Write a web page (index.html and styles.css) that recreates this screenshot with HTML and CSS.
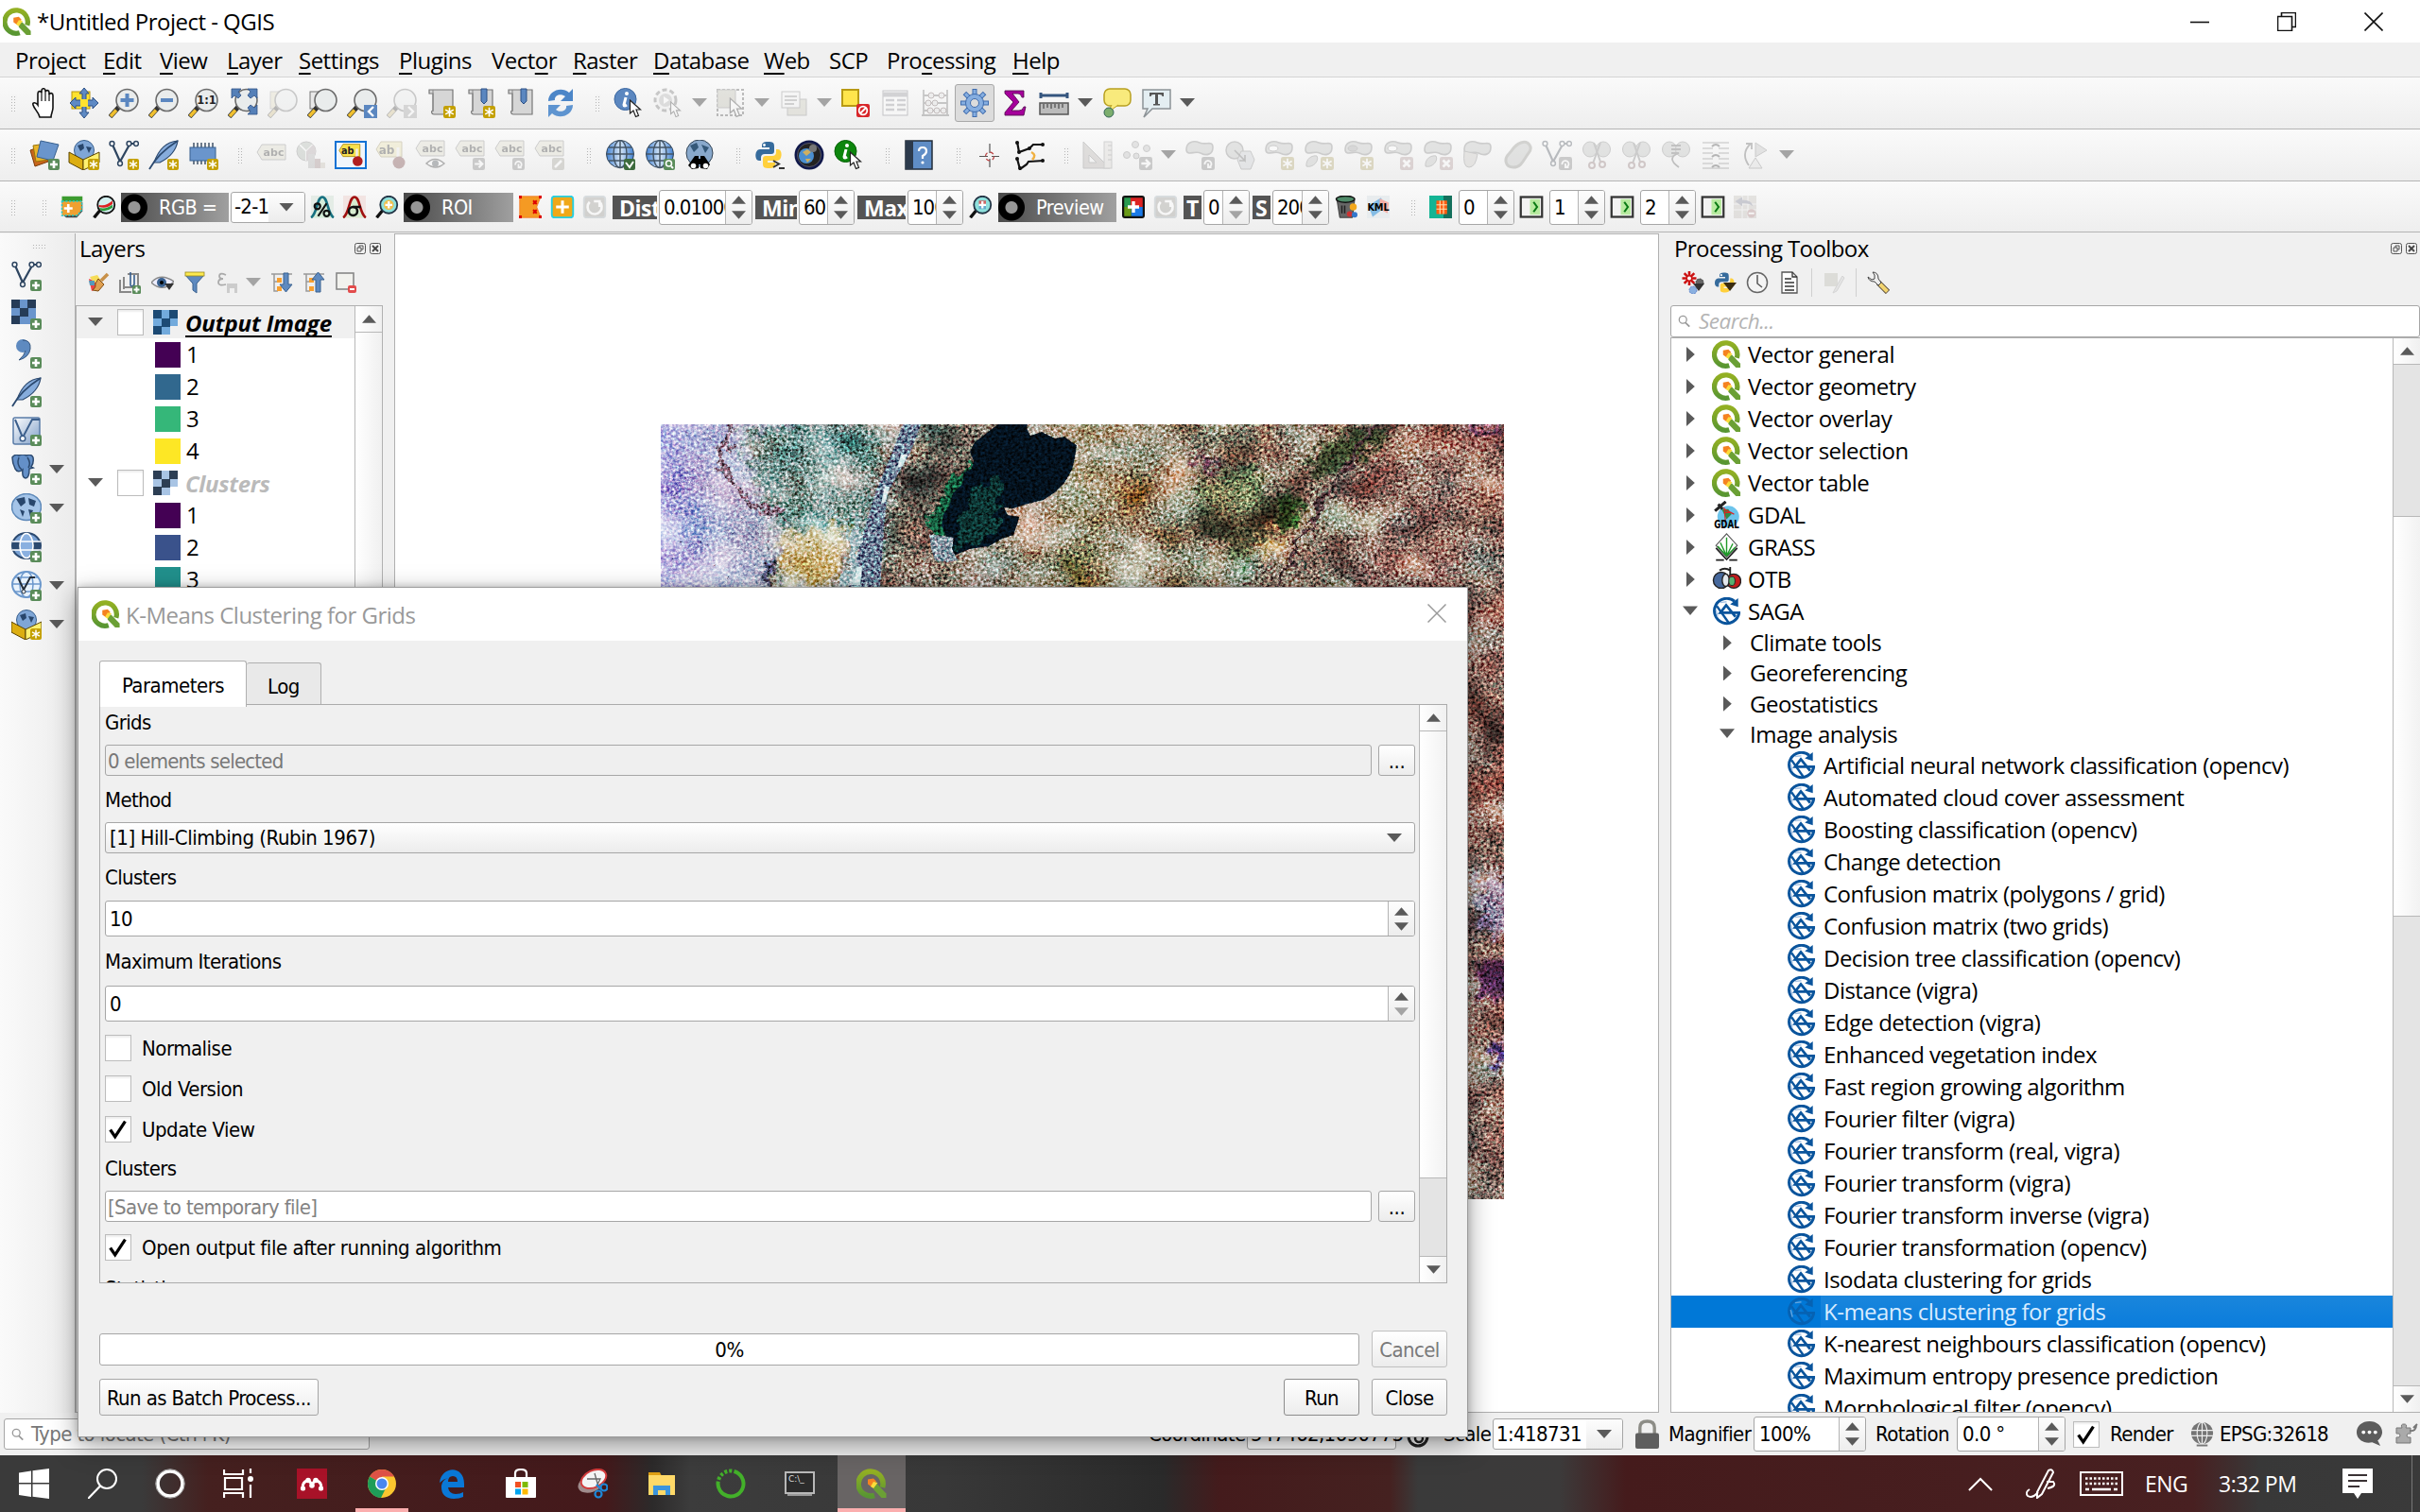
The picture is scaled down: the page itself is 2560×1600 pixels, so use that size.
FILE: index.html
```html
<!DOCTYPE html>
<html lang="en">
<head>
<meta charset="utf-8">
<title>*Untitled Project - QGIS</title>
<link rel="stylesheet" href="styles.css">
</head>
<body>
<svg class="defs" aria-hidden="true">
  <defs>
    <linearGradient id="gq" x1="0" y1="0" x2="0" y2="1"><stop offset="0" stop-color="#93b023"/><stop offset="1" stop-color="#589632"/></linearGradient>
    <linearGradient id="gg" x1="0" y1="0" x2="1" y2="0"><stop offset="0" stop-color="#3f7fd0"/><stop offset=".5" stop-color="#d8e8f8"/><stop offset="1" stop-color="#3f7fd0"/></linearGradient>
    <linearGradient id="gl" x1="0" y1="0" x2="1" y2="1"><stop offset="0" stop-color="#fff"/><stop offset="1" stop-color="#7f9fc8"/></linearGradient>
  </defs>
  <symbol id="bp" viewBox="0 0 12 12"><rect width="12" height="12" rx="2" fill="#5a8c5a"/><path d="M6 2v8M2 6h8" stroke="#fff" stroke-width="2.6"/></symbol>
  <symbol id="bs" viewBox="0 0 12 12"><rect width="12" height="12" rx="2" fill="#c4a000"/><path d="M6 1.500v9M2 3.800l8 4.400M10 3.800L2 8.200" stroke="#fff" stroke-width="1.500"/></symbol>
  <symbol id="bx" viewBox="0 0 12 12"><rect width="12" height="12" rx="2" fill="#c88"/><path d="M3 3l6 6M9 3L3 9" stroke="#fff" stroke-width="2.4"/></symbol>
  <symbol id="br" viewBox="0 0 12 12"><rect width="12" height="12" rx="2" fill="#777"/><path d="M3 7a3 3 0 1 1 3 2.500M6 6v3.500H9" stroke="#fff" stroke-width="1.6" fill="none"/></symbol>
  <symbol id="ba" viewBox="0 0 12 12"><rect width="12" height="12" rx="2" fill="#777"/><path d="M2 6h7M6 2.500L9.500 6 6 9.500" stroke="#fff" stroke-width="2" fill="none"/></symbol>
  <symbol id="cur" viewBox="0 0 14 20"><path d="M1 1v14l3.500-3 2.500 6.500 3-1.200L7.500 11H12z" fill="#fff" stroke="#222" stroke-width="1.200"/></symbol>
  <symbol id="q" viewBox="0 0 32 32"><path d="M27.500 20A13 13 0 1 0 19 28.500" fill="none" stroke="url(#gq)" stroke-width="5.600"/><path d="M18 17l4-.5 9.500 10V31h-5L18 22z" fill="#6ba035"/><path d="M12 11.500l6-1 3 3-5 6-4-3z" fill="#f58220"/><path d="M18 14l4.500 1-4.500 6-3-2z" fill="#fbdc3a"/></symbol>
  <symbol id="mg" viewBox="0 0 32 32"><path d="M1.500 30.500L11 20" stroke="#333" stroke-width="5"/><path d="M2 30l6-6.500" stroke="#f0c030" stroke-width="3.600"/><circle cx="19.500" cy="13" r="11.500" fill="#e9ecec" stroke="#6c6c6c" stroke-width="1.600"/></symbol>
  <symbol id="hand" viewBox="0 0 32 32"><path d="M11 31c-1-5-6-9-7-13-1-3 3-3 5 0V6c0-3 3-3 4-1V3c0-3 4-3 4 0v1c1-2 4-2 4 1v2c1-2 4-2 4 1v13c0 4-2 6-2 10z" fill="#fff" stroke="#111" stroke-width="1.600"/><path d="M13 5v9M17 4v10M21 6v8" stroke="#111" stroke-width="1.200"/></symbol>
  <symbol id="pan" viewBox="0 0 32 32"><rect x="3" y="4" width="19" height="18" fill="#ffe22e" stroke="#b8960c"/><path d="M16 0l5 6h-3v7h7v-3l6 6-6 6v-3h-7v7h3l-5 6-5-6h3v-7H7v3l-6-6 6-6v3h7V6h-3z" fill="#5e8ac4" stroke="#2d5086"/><rect x="12" y="12" width="8" height="8" fill="#ffe22e"/></symbol>
  <symbol id="zin" viewBox="0 0 32 32"><use href="#mg"/><path d="M19.500 6v14M12.500 13h14" stroke="#5b87c0" stroke-width="4"/></symbol>
  <symbol id="zout" viewBox="0 0 32 32"><use href="#mg"/><path d="M13 13h13" stroke="#5b87c0" stroke-width="4"/></symbol>
  <symbol id="z11" viewBox="0 0 32 32"><use href="#mg"/><text x="19.500" y="17" font-size="11.500" font-weight="700" text-anchor="middle" fill="#222">1:1</text></symbol>
  <symbol id="zfull" viewBox="0 0 32 32"><use href="#mg"/><g fill="#5580b8" stroke="#2d5086" stroke-width=".8"><path d="M4 1h10l-3 3 3 4-3 3-4-3-3 3z"/><path d="M31 1H21l3 3-3 4 3 3 4-3 3 3z"/><path d="M31 28H21l3-3-3-4 3-3 4 3 3-3z"/></g></symbol>
  <symbol id="zsel" viewBox="0 0 32 32"><rect x="3" y="4" width="16" height="18" fill="#e8dc90" stroke="#999"/><use href="#mg"/></symbol>
  <symbol id="zlay" viewBox="0 0 32 32"><rect x="3" y="4" width="16" height="18" fill="#e8e8e8" stroke="#777"/><use href="#mg"/></symbol>
  <symbol id="zlast" viewBox="0 0 32 32"><use href="#mg"/><rect x="18" y="18" width="14" height="14" fill="#5b87c0"/><path d="M28 20l-5 5 5 5" stroke="#fff" stroke-width="2.400" fill="none"/></symbol>
  <symbol id="znext" viewBox="0 0 32 32"><use href="#mg"/><rect x="18" y="18" width="14" height="14" fill="#999"/><path d="M23 20l5 5-5 5" stroke="#fff" stroke-width="2.400" fill="none"/></symbol>
  <symbol id="map" viewBox="0 0 32 32"><path d="M3 2h25v26H8c-3 0-3-4-1-4V6H3z" fill="#d6d6d6" stroke="#777" stroke-width="1.200"/><path d="M7 2v23" stroke="#888"/></symbol>
  <symbol id="map1" viewBox="0 0 32 32"><use href="#map"/><use href="#bs" x="18" y="19" width="13" height="13"/></symbol>
  <symbol id="map2" viewBox="0 0 32 32"><use href="#map"/><path d="M16 1h6v13l-3 3-3-3z" fill="#5b87c0" stroke="#2d5086"/><use href="#bs" x="18" y="19" width="13" height="13"/></symbol>
  <symbol id="map3" viewBox="0 0 32 32"><use href="#map"/><path d="M16 1h6v13l-3 3-3-3z" fill="#5b87c0" stroke="#2d5086"/></symbol>
  <symbol id="refr" viewBox="0 0 32 32"><path d="M3 14C3 3 17-2 25 5l4-4v13H16l5-5C16 5 9 8 10 13z" fill="#4c86c8"/><path d="M29 18c0 11-14 16-22 9l-4 4V18h13l-5 5c5 4 12 1 11-4z" fill="#5e94d0"/></symbol>
  <symbol id="iden" viewBox="0 0 32 32"><circle cx="12.500" cy="12" r="11.500" fill="#5b87c0" stroke="#3b67a0"/><path d="M13 10l-2 8q0 2 3 0" stroke="#fff" stroke-width="3" fill="none"/><circle cx="14" cy="6" r="2" fill="#fff"/><use href="#cur" x="16" y="12" width="15" height="20"/></symbol>
  <symbol id="idg" viewBox="0 0 32 32"><circle cx="12.500" cy="12" r="11.500" fill="#0d860d" stroke="#076007"/><path d="M13 10l-2 8q0 2 3 0" stroke="#fff" stroke-width="3" fill="none"/><circle cx="14" cy="6" r="2" fill="#fff"/><use href="#cur" x="16" y="12" width="15" height="20"/></symbol>
  <symbol id="act" viewBox="0 0 32 32"><circle cx="13" cy="13" r="11" fill="#eee" stroke="#666" stroke-width="3" stroke-dasharray="5 3"/><circle cx="13" cy="13" r="7" fill="#aaa"/><path d="M11 9l6 4-6 4z" fill="#fff"/><use href="#cur" x="17" y="14" width="14" height="18"/></symbol>
  <symbol id="selr" viewBox="0 0 32 32"><rect x="2" y="2" width="27" height="27" fill="none" stroke="#444" stroke-width="2" stroke-dasharray="3 2"/><rect x="2" y="2" width="19" height="19" fill="#bcb890" stroke="#777"/><use href="#cur" x="14" y="10" width="16" height="22"/></symbol>
  <symbol id="form" viewBox="0 0 32 32"><rect x="10" y="12" width="20" height="17" fill="#c8c49a" stroke="#777"/><rect x="4" y="4" width="19" height="17" fill="#f4f4f4" stroke="#777"/><path d="M7 9h13M7 13h13M7 17h10" stroke="#888" stroke-width="2"/></symbol>
  <symbol id="dsel" viewBox="0 0 32 32"><rect x="2" y="2" width="17" height="17" fill="#ffe54c" stroke="#b89a14" stroke-width="2"/><rect x="17" y="17" width="14" height="14" rx="2" fill="#d8262a"/><circle cx="24" cy="24" r="4.300" fill="none" stroke="#fff" stroke-width="1.800"/><path d="M21 27l6-6" stroke="#fff" stroke-width="1.800"/></symbol>
  <symbol id="tab" viewBox="0 0 32 32"><rect x="3" y="3" width="26" height="26" fill="#fff" stroke="#667"/><path d="M3 7h26" stroke="#889" stroke-width="5"/><path d="M6 13h9M18 13h9M6 18h9M18 18h9M6 23h9M18 23h9" stroke="#889" stroke-width="2.400"/></symbol>
  <symbol id="abac" viewBox="0 0 32 32"><path d="M4 2v28M29 2v28M2 29h29M4 8h25M4 16h25M4 24h25" stroke="#666" stroke-width="1.800"/><g fill="#ddd" stroke="#744"><circle cx="12" cy="8" r="3"/><circle cx="23" cy="8" r="3"/><circle cx="9" cy="16" r="3"/><circle cx="16" cy="16" r="3"/><circle cx="11" cy="24" r="3"/><circle cx="18" cy="24" r="3"/><circle cx="25" cy="24" r="3"/></g></symbol>
  <symbol id="gear" viewBox="0 0 32 32"><g stroke="#3f6cae" stroke-width="5"><path d="M16 1v30M1 16h30M5.400 5.400l21.200 21.200M26.600 5.400L5.400 26.600"/></g><g stroke="#86aee0" stroke-width="3"><path d="M16 2v28M2 16h28M6.100 6.100l19.800 19.800M25.900 6.100L6.100 25.900"/></g><circle cx="16" cy="16" r="9.500" fill="#86aee0" stroke="#3f6cae"/><circle cx="16" cy="16" r="4.500" fill="#dcdcdc" stroke="#3f6cae"/></symbol>
  <symbol id="sum" viewBox="0 0 32 32"><path d="M6 3h20v7h-2q-1-4-4-4h-6l7 9-8 9h8q4 0 5-4h2l-2 9H6v-3l9-11L6 6z" fill="#a5009b" stroke="#4c0048" stroke-width=".8"/></symbol>
  <symbol id="meas" viewBox="0 0 32 32"><path d="M2 8h28M2 5v6M30 5v6" stroke="#34557e" stroke-width="3"/><rect x="1" y="16" width="30" height="12" fill="#bbb" stroke="#555" stroke-width="1.500"/><path d="M5 17v5M9 17v4M13 17v5M17 17v4M21 17v5M25 17v4" stroke="#333"/></symbol>
  <symbol id="tip" viewBox="0 0 32 32"><rect x="3" y="1" width="28" height="18" rx="6" fill="#f8ea7c" stroke="#b8a020" stroke-width="1.500"/><path d="M11 18l-4 8 11-8" fill="#f8ea7c" stroke="#b8a020"/><circle cx="8" cy="26" r="5" fill="#7cae6e" stroke="#365"/></symbol>
  <symbol id="ann" viewBox="0 0 32 32"><path d="M2 2h29v20H12l-9 9 4-9H2z" fill="#e4eef2" stroke="#8c9296" stroke-width="1.500"/><path d="M9 5h15v4h-1.500q0-2-3-2H18v10h2v1.500h-7V17h2V7h-1.500q-3 0-3 2H9z" fill="#555"/></symbol>

  <symbol id="dsm" viewBox="0 0 32 32"><path d="M1 11l14-5 5 17-14 5z" fill="#c8651c" stroke="#7c3c08"/><path d="M4 6l14-2 3 17-14 2z" fill="#e9b52a" stroke="#9a7408"/><path d="M12 1l19 4-6 17-17-4z" fill="#6a95cc" stroke="#38608f"/><use href="#bp" x="20" y="20" width="12" height="12"/></symbol>
  <symbol id="gpk" viewBox="0 0 32 32"><circle cx="16" cy="11" r="10.500" fill="#7fa6d6" stroke="#38608f"/><path d="M9 6l6-2 1 5-4 3zM18 7l6 1-3 6z" fill="#28466c"/><path d="M0 13l15 8v11L0 24z" fill="#dcae12" stroke="#5a4400"/><path d="M32 13l-17 8v11l17-8z" fill="#fff170" stroke="#5a4400"/><use href="#bs" x="20" y="20" width="12" height="12"/></symbol>
  <symbol id="vv" viewBox="0 0 32 32"><path d="M4 5l8 18L22 5M24 4h5" fill="none" stroke="#2e4560" stroke-width="2.200"/><g fill="#fff" stroke="#2e4560" stroke-width="1.500"><circle cx="3.500" cy="4" r="2.400"/><circle cx="12" cy="25" r="2.400"/><circle cx="21.500" cy="4" r="2.400"/><circle cx="29" cy="4" r="2.400"/></g></symbol>
  <symbol id="vs" viewBox="0 0 32 32"><use href="#vv"/><use href="#bs" x="20" y="20" width="12" height="12"/></symbol>
  <symbol id="vp" viewBox="0 0 32 32"><use href="#vv"/><use href="#bp" x="20" y="20" width="12" height="12"/></symbol>
  <symbol id="fth" viewBox="0 0 32 32"><path d="M31 1C20 2 11 9 6 24l6 0c8-4 17-10 19-23z" fill="#86acdc" stroke="#2c4a70" stroke-width="1.200"/><path d="M31 1C20 8 8 18 1 31" fill="none" stroke="#2c4a70" stroke-width="1.800"/></symbol>
  <symbol id="fs" viewBox="0 0 32 32"><use href="#fth"/><use href="#bs" x="20" y="20" width="12" height="12"/></symbol>
  <symbol id="fp" viewBox="0 0 32 32"><use href="#fth"/><use href="#bp" x="20" y="20" width="12" height="12"/></symbol>
  <symbol id="chip" viewBox="0 0 32 32"><path d="M6 3v23M10 3v23M14 3v23M18 3v23M22 3v23M26 3v23" stroke="#4c5c70" stroke-width="1.600"/><rect x="2" y="8" width="27" height="14" fill="#6a95cc" stroke="#38608f"/><use href="#bs" x="20" y="20" width="12" height="12"/></symbol>
  <symbol id="abc" viewBox="0 0 32 32"><path d="M1 13l5-8h25v16H6z" fill="#ddd8a8" stroke="#777"/><text x="18.500" y="17" font-size="11" font-weight="700" text-anchor="middle" fill="#222">abc</text></symbol>
  <symbol id="dia" viewBox="0 0 32 32"><circle cx="11" cy="12" r="10" fill="#9cb49c" stroke="#777"/><path d="M11 12L4 5M11 12l7-7M11 12v10" stroke="#fff" stroke-width="1.500"/><path d="M11 12l7-7a10 10 0 0 1-7 17z" fill="#b898a0"/><rect x="13" y="15" width="7" height="15" fill="#aaa"/><rect x="20" y="20" width="6" height="10" fill="#b77"/><rect x="26" y="24" width="5" height="6" fill="#cb9"/></symbol>
  <symbol id="abp" viewBox="0 0 32 32"><path d="M1 10l5-8h22v16H6z" fill="#f8e04c" stroke="#a8860a"/><text x="12" y="15" font-size="12" font-weight="700" text-anchor="middle" fill="#222">ab</text><path d="M24 8v16" stroke="#eee" stroke-width="3"/><circle cx="25" cy="24" r="6.500" fill="#b01f1f"/></symbol>
  <symbol id="abe" viewBox="0 0 32 32"><use href="#abc" y="-4"/><path d="M12 25q9-9 19 0-9 8-19 0z" fill="#fff" stroke="#222" stroke-width="1.500"/><circle cx="21.500" cy="25" r="3.500" fill="#345"/></symbol>
  <symbol id="abm" viewBox="0 0 32 32"><use href="#abc" y="-4"/><use href="#ba" x="19" y="19" width="13" height="13"/></symbol>
  <symbol id="abr" viewBox="0 0 32 32"><use href="#abc" y="-4"/><use href="#br" x="19" y="19" width="13" height="13"/></symbol>
  <symbol id="abed" viewBox="0 0 32 32"><use href="#abc" y="-4"/><rect x="19" y="19" width="13" height="13" rx="2" fill="#a09a80"/><path d="M22 29l7-7" stroke="#fff" stroke-width="2.500"/></symbol>
  <symbol id="glb" viewBox="0 0 32 32"><circle cx="16" cy="15" r="14.500" fill="url(#gg)" stroke="#345" stroke-width="1"/><ellipse cx="16" cy="15" rx="7" ry="14.500" fill="none" stroke="#456" stroke-width="1.500"/><path d="M1.500 15h29M4 8h24M4 22h24M16 1v28" stroke="#456" stroke-width="1.500"/></symbol>
  <symbol id="glc" viewBox="0 0 32 32"><use href="#glb"/><rect x="20" y="20" width="12" height="12" rx="2" fill="#3d6b3d"/><path d="M22 24l4 5 4-6" stroke="#fff" stroke-width="2" fill="none"/></symbol>
  <symbol id="gls" viewBox="0 0 32 32"><use href="#glb"/><rect x="20" y="20" width="12" height="12" rx="2" fill="#5a8c5a"/><circle cx="25.500" cy="25" r="3" stroke="#fff" stroke-width="1.600" fill="none"/><path d="M28 28l2 2" stroke="#fff" stroke-width="2"/></symbol>
  <symbol id="glbn" viewBox="0 0 32 32"><circle cx="16" cy="14" r="14" fill="#89a9cc" stroke="#345"/><path d="M6 6l7-3 2 5-5 5zM18 5l8 3-4 6z" fill="#345878"/><path d="M11 17h4v3h2v-3h4l6 9-3 5-7-1v-4h-2v4l-7 1-4-4z" fill="#000"/><circle cx="9.500" cy="27.500" r="2.800" fill="#fff"/><circle cx="22.500" cy="27.500" r="2.800" fill="#fff"/></symbol>
  <symbol id="py" viewBox="0 0 32 32"><path d="M14 2c6 0 7 1 7 5v5q0 3-3 3h-7q-4 0-4 4v3H5c-5 0-5-12 1-12h10V8H8V6c0-3 2-4 6-4z" fill="#366b9c"/><path d="M16 30c-6 0-7-1-7-5v-5q0-3 3-3h7q4 0 4-4v-3h2c5 0 5 12-1 12H14v2h8v2c0 3-2 4-6 4z" fill="#ffd03c"/><circle cx="10.500" cy="5.500" r="1.400" fill="#fff"/></symbol>
  <symbol id="pyc" viewBox="0 0 32 32"><use href="#py"/><path d="M20 22l6 3.500-6 3.500M26 30h6" stroke="#333" stroke-width="2" fill="none"/></symbol>
  <symbol id="ea" viewBox="0 0 32 32"><circle cx="16" cy="16" r="15.500" fill="#10184a"/><circle cx="16" cy="16" r="12.500" fill="#222" stroke="#556" /><circle cx="13" cy="17" r="8" fill="#4b8fd0"/><path d="M9 13l5-3 4 3-5 4zM12 20l6 0-4 4z" fill="#d0b060"/><circle cx="20" cy="9" r="4" fill="#777"/></symbol>
  <symbol id="help" viewBox="0 0 32 32"><rect x="2" y="1" width="28" height="30" fill="#5f8dc6" stroke="#222c38" stroke-width="1.500"/><rect x="2" y="1" width="8" height="30" fill="#2c3a4c"/><path d="M16 12q0-4 4-4t4 4q0 3-4 5v3" stroke="#fff" stroke-width="2.200" fill="none"/><circle cx="20" cy="24" r="1.600" fill="#fff"/></symbol>
  <symbol id="crs" viewBox="0 0 32 32"><path d="M16 4v10M16 20v9M5 17.500h9M18 17.500h8" stroke="#555" stroke-width="1.200"/><circle cx="16" cy="17.500" r="4.500" fill="none" stroke="#b44" stroke-width="1.300" stroke-dasharray="4 3"/></symbol>
  <symbol id="snp" viewBox="0 0 32 32"><path d="M3 2l2 11 11-4 4-4h11M3 20l3 11 7-5 2-3 16-1" stroke="#111" stroke-width="2.200" fill="none"/><path d="M18 13q6 3 1 8" stroke="#f0b040" stroke-width="2.500" fill="none"/><g fill="#111"><circle cx="3" cy="3" r="2"/><circle cx="5" cy="13" r="2"/><circle cx="16" cy="9" r="2"/><circle cx="30" cy="5" r="2"/><circle cx="6" cy="30" r="2"/><circle cx="30" cy="22" r="2"/><circle cx="3" cy="20" r="2"/></g></symbol>
  <symbol id="tri" viewBox="0 0 32 32"><path d="M1 2l28 28H1zM7 16v8h8z" fill="#b8aaa0" stroke="#777" fill-rule="evenodd"/><rect x="23" y="2" width="8" height="28" fill="#ddd6cc" stroke="#888"/><path d="M27 6h4M27 11h4M27 16h4M27 21h4" stroke="#777"/></symbol>
  <symbol id="pts" viewBox="0 0 32 32"><g fill="#bbb" stroke="#777"><circle cx="14" cy="5" r="3.500"/><circle cx="5" cy="16" r="3.500"/><circle cx="26" cy="9" r="3.500"/><circle cx="15" cy="17" r="3"/></g><use href="#ba" x="18" y="18" width="14" height="14"/></symbol>
  <symbol id="blob" viewBox="0 0 32 32"><path d="M2 10C2 3 9 0 16 3s14-3 14 5-7 9-13 6-15 4-15-4z" fill="#b6bcb6" stroke="#777" stroke-width="1.600"/></symbol>
  <symbol id="d1" viewBox="0 0 32 32"><use href="#blob"/><use href="#br" x="18" y="18" width="14" height="14"/></symbol>
  <symbol id="d2" viewBox="0 0 32 32"><circle cx="11" cy="11" r="9" fill="#b6bcb6" stroke="#777" stroke-width="1.500"/><path d="M18 12h10l4 9-4 10H18l-4-10z" fill="#bfc8d4" stroke="#777"/><path d="M11 11l11 11v-6M22 22h-6" stroke="#555" stroke-width="1.600" fill="none"/></symbol>
  <symbol id="d3" viewBox="0 0 32 32"><use href="#blob"/><ellipse cx="10" cy="9" rx="5" ry="3" fill="#fff" stroke="#777"/><use href="#bs" x="18" y="18" width="14" height="14"/></symbol>
  <symbol id="d4" viewBox="0 0 32 32"><use href="#blob"/><path d="M3 28c-1-8 6-12 11-11 3 5-4 13-11 11z" fill="#b6bcb6" stroke="#777"/><use href="#bs" x="18" y="18" width="14" height="14"/></symbol>
  <symbol id="d5" viewBox="0 0 32 32"><use href="#blob"/><ellipse cx="10" cy="9" rx="5" ry="3" fill="#999" stroke="#777"/><use href="#bs" x="18" y="18" width="14" height="14"/></symbol>
  <symbol id="d6" viewBox="0 0 32 32"><use href="#blob"/><ellipse cx="10" cy="9" rx="5" ry="3" fill="#fff" stroke="#777"/><use href="#bx" x="18" y="18" width="14" height="14"/></symbol>
  <symbol id="d7" viewBox="0 0 32 32"><use href="#blob"/><path d="M3 28c-1-8 6-12 11-11 3 5-4 13-11 11z" fill="#b6bcb6" stroke="#777"/><use href="#bx" x="18" y="18" width="14" height="14"/></symbol>
  <symbol id="d8" viewBox="0 0 32 32"><use href="#blob"/><path d="M2 12l14 3q-2 14-9 14T2 12z" fill="#c8c0b4" stroke="#777"/></symbol>
  <symbol id="d9" viewBox="0 0 32 32"><path d="M20 3c8-3 13 5 8 11s-7 15-16 15S2 20 7 15 12 6 20 3z" fill="#b6bcb6" stroke="#887" stroke-width="3"/></symbol>
  <symbol id="d10" viewBox="0 0 32 32"><use href="#vv"/><use href="#br" x="18" y="18" width="14" height="14"/></symbol>
  <symbol id="d11" viewBox="0 0 32 32"><ellipse cx="9" cy="10" rx="7.500" ry="8" fill="#b6bcb6" stroke="#777"/><ellipse cx="23" cy="10" rx="7.500" ry="8" fill="#b6bcb6" stroke="#777"/><path d="M20 3l-8 22M13 3l7 20" stroke="#777" stroke-width="2"/><circle cx="11" cy="27" r="3" fill="none" stroke="#a66" stroke-width="2"/><circle cx="22" cy="26" r="3" fill="none" stroke="#a66" stroke-width="2"/></symbol>
  <symbol id="d12" viewBox="0 0 32 32"><ellipse cx="9" cy="10" rx="7.500" ry="8" fill="#b6bcb6" stroke="#777"/><ellipse cx="23" cy="10" rx="7.500" ry="8" fill="#b6bcb6" stroke="#777"/><path d="M11 6h10M11 10h10M11 14h8q-14 5 0 15" stroke="#555" stroke-width="1.800" fill="none"/></symbol>
  <symbol id="d13" viewBox="0 0 32 32"><path d="M2 3h28M2 9h11M19 9h11M2 14h11M19 14h11M2 20h11M19 20h11M2 25h11M19 25h11M2 30h28" stroke="#888" stroke-width="1.500"/><path d="M12 7q4-4 8 0M12 18q4-4 8 0M12 29q4-4 8 0" stroke="#333" stroke-width="2" fill="none"/></symbol>
  <symbol id="d14" viewBox="0 0 32 32"><path d="M16 3v15l12-7z" fill="#bbb" stroke="#777"/><path d="M16 19l7 11H9z" fill="#ddd" stroke="#777"/><path d="M9 27Q0 14 11 4M6 4h6v6" stroke="#555" stroke-width="1.800" fill="none"/></symbol>

  <symbol id="s1" viewBox="0 0 32 32"><rect x="2" y="1" width="29" height="7" fill="#3c9c30"/><path d="M2 9h29v13l-8 9H8l-5-4z" fill="#444"/><path d="M2 8h28v12l-6 8H2z" fill="#f0a030" stroke="#2cc" stroke-width="2" stroke-dasharray="3 2"/><path d="M11 12v12M5 18h12" stroke="#fff" stroke-width="3.500"/></symbol>
  <symbol id="s2" viewBox="0 0 32 32"><path d="M2 31l9-11" stroke="#111" stroke-width="4.500"/><circle cx="19" cy="13" r="12" fill="#d4f0f0" stroke="#111" stroke-width="2.400"/><path d="M9 13q9 3 19-6v5q-8 7-19 4z" fill="#d22"/><path d="M9 17q9 3 19-4v4q-8 6-16 4z" fill="#2a9a3a"/></symbol>
  <symbol id="s3" viewBox="0 0 32 32"><rect width="32" height="32" fill="#e4ece6"/><path d="M0 31C9 26 8 2 16 2s7 24 16 29" fill="#d4ecd8" stroke="#167080" stroke-width="3.500"/><circle cx="9" cy="15" r="4" stroke="#111" stroke-width="3" fill="none"/><circle cx="22" cy="25" r="4" stroke="#111" stroke-width="3" fill="none"/><path d="M22 11L10 29" stroke="#111" stroke-width="3"/></symbol>
  <symbol id="s4" viewBox="0 0 32 32"><rect width="32" height="32" fill="#f2e4e2"/><path d="M0 31C9 26 8 2 16 2s7 24 16 29" fill="#d8ecd0" stroke="#a01010" stroke-width="3.500"/><circle cx="14" cy="22" r="6" stroke="#111" stroke-width="3.400" fill="none"/><path d="M14 16h11" stroke="#111" stroke-width="3.400"/></symbol>
  <symbol id="s5" viewBox="0 0 32 32"><path d="M2 31l9-11" stroke="#111" stroke-width="4.500"/><circle cx="19" cy="13" r="12" fill="#8ee0dc" stroke="#234" stroke-width="2.400"/><circle cx="19" cy="13" r="7" fill="#f0c050"/><path d="M19 8v10M14 13h10" stroke="#fff" stroke-width="3"/></symbol>
  <symbol id="s5b" viewBox="0 0 32 32"><path d="M2 31l9-11" stroke="#111" stroke-width="4.500"/><circle cx="19" cy="13" r="12" fill="#8ee0dc" stroke="#234" stroke-width="2.400"/><rect x="14" y="7" width="10" height="6" fill="#c66"/><rect x="14" y="13" width="10" height="6" fill="#6ac"/><path d="M19 8v10M14 13h10" stroke="#fff" stroke-width="3"/></symbol>
  <symbol id="s6" viewBox="0 0 32 32"><path d="M1 1h30l-6 15 6 15H1z" fill="#f59a23" stroke="#f2701c"/><g fill="#d00"><path d="M0 0h4v4H0zM28 0h4v4h-4zM0 28h4v4H0zM28 28h4v4h-4z"/></g><path d="M20 7l5 5M25 7l-5 5M20 20l5 5M25 20l-5 5" stroke="#d00" stroke-width="2.500"/></symbol>
  <symbol id="s7" viewBox="0 0 32 32"><rect x="1" y="1" width="30" height="30" rx="4" fill="#f0a818" stroke="#24d0e4" stroke-width="2.500"/><path d="M16 7v18M7 16h18" stroke="#fff" stroke-width="4"/></symbol>
  <symbol id="s8" viewBox="0 0 32 32"><rect x="1" y="1" width="30" height="30" rx="4" fill="#908c78" stroke="#8ab" stroke-width="2.500"/><path d="M9 9a10 10 0 1 0 13-1h-6M15 8h8v8" stroke="#fff" stroke-width="3.500" fill="none"/></symbol>
  <symbol id="s9" viewBox="0 0 32 32"><rect width="32" height="32" rx="4" fill="#111"/><rect x="3" y="3" width="9" height="13" fill="#2a9a50"/><rect x="12" y="3" width="17" height="13" fill="#d22"/><rect x="3" y="16" width="10" height="13" fill="#6a9a18"/><rect x="13" y="16" width="16" height="13" fill="#1a7ae8"/><path d="M16 8v16M8 16h16" stroke="#fff" stroke-width="4.500"/></symbol>
  <symbol id="s10" viewBox="0 0 32 32"><path d="M3 6h25l-3 25H7z" fill="#666" stroke="#222"/><ellipse cx="15" cy="5" rx="13" ry="4.500" fill="#4e8a68" stroke="#111" stroke-width="2"/><path d="M10 14v11M14 14v11" stroke="#222" stroke-width="2"/><circle cx="26" cy="16" r="5" fill="#f4a81c"/><circle cx="21" cy="26" r="4" fill="#c33"/><circle cx="28" cy="27" r="4" fill="#37c"/></symbol>
  <symbol id="s11" viewBox="0 0 32 32"><rect width="32" height="32" fill="#e8ecee"/><path d="M2 14L20 3l5 14L8 30z" fill="#84bce4"/><path d="M18 4l13 6-2 15-11-6z" fill="#f4b0a8"/><text x="16" y="21" font-size="14" font-weight="700" text-anchor="middle" fill="#000" textLength="31" lengthAdjust="spacingAndGlyphs">KML</text></symbol>
  <symbol id="s12" viewBox="0 0 32 32"><rect width="32" height="32" fill="#14b494"/><rect x="20" width="12" height="32" fill="#14705c"/><rect x="10" y="7" width="15" height="19" fill="#ff5c10"/><path d="M15 7v19M20 7v19M10 13h15M10 19h15" stroke="#ffe0b0" stroke-width="1.500"/></symbol>
  <symbol id="s13" viewBox="0 0 32 32"><rect x="1" y="2" width="30" height="28" fill="#f2f2f2" stroke="#333" stroke-width="3"/><rect x="14" y="5" width="14" height="22" fill="#b8eaa0"/><path d="M19 9l5 7-5 7" stroke="#0a7a14" stroke-width="2.800" fill="none"/></symbol>
  <symbol id="s14" viewBox="0 0 32 32"><rect width="32" height="32" fill="#c4b8a8"/><path d="M0 12h32M0 20h32M12 0v32M20 0v32" stroke="#eee" stroke-width="1.500"/><path d="M2 8l10-6v4q14 0 15 9-5-5-15-4v4z" fill="#6a70a8"/><circle cx="25" cy="25" r="6" fill="#d66"/><path d="M21 25h8" stroke="#fff" stroke-width="2.500"/></symbol>

  <symbol id="ras" viewBox="0 0 26 26"><rect width="26" height="26" fill="var(--l)"/><path d="M0 0h9v9H0zM17 0h9v9h-9zM9 9h9v9H9zM0 17h9v9H0z" fill="var(--d)"/><path d="M18 17h8v9h-8z" fill="var(--e)"/></symbol>
  <symbol id="rp" viewBox="0 0 32 32"><g class="r0"><use href="#ras" width="26" height="26"/></g><use href="#bp" x="20" y="20" width="12" height="12"/></symbol>
  <symbol id="com" viewBox="0 0 32 32"><circle cx="12" cy="8" r="7" fill="#5e8ac0"/><path d="M12 2q9 0 8 9-1 9-12 12 6-5 7-10" fill="#5e8ac0" stroke="#34557e"/><use href="#bp" x="20" y="20" width="12" height="12"/></symbol>
  <symbol id="vl" viewBox="0 0 32 32"><rect x="2" y="2" width="28" height="28" rx="2" fill="url(#gl)" stroke="#5a7ca8" stroke-width="1.500"/><path d="M4 4l8 19L22 4h8" fill="none" stroke="#3c5f8c" stroke-width="2"/><circle cx="12" cy="24" r="2.800" fill="#fff" stroke="#3c5f8c" stroke-width="1.500"/><use href="#bp" x="20" y="20" width="12" height="12"/></symbol>
  <symbol id="pg" viewBox="0 0 32 32"><path d="M1 3q3-4 7-2 4-2 8 0 5-2 7 2 1 6-2 10l2 1-4 1q0 10-4 10-4-1-3-9-5 4-8-1-3-6-3-12z" fill="#6490c8" stroke="#2c4a70" stroke-width="1.500"/><path d="M8 3q-3 8 3 13M17 3q4 6 1 11" stroke="#2c4a70" stroke-width="1.500" fill="none"/><use href="#bp" x="20" y="20" width="12" height="12"/></symbol>
  <symbol id="g1" viewBox="0 0 32 32"><ellipse cx="16" cy="14.500" rx="15.500" ry="14" fill="#a4c4e8" stroke="#5c88b8" stroke-width="1.500"/><path d="M5 6l9-2 1 6-5 4zM18 5l8 3-2 6-5-2zM9 17l5 2-2 6zM18 17l5 1-3 7z" fill="#28466c"/><use href="#bp" x="20" y="20" width="12" height="12"/></symbol>
  <symbol id="g2" viewBox="0 0 32 32"><ellipse cx="16" cy="14.500" rx="15" ry="13.500" fill="#7aa2d4" stroke="#2c4a70" stroke-width="2"/><path d="M2 10h28v9H2z" fill="#2c4a70"/><ellipse cx="16" cy="14.500" rx="7" ry="13" fill="#8ab0e0" stroke="#fff" stroke-width="1.600"/><path d="M1 10h30M1 19h30" stroke="#fff" stroke-width="1.600"/><use href="#bp" x="20" y="20" width="12" height="12"/></symbol>
  <symbol id="g3" viewBox="0 0 32 32"><ellipse cx="16" cy="14.500" rx="15" ry="13.500" fill="#e8f2fc" stroke="#6c98cc" stroke-width="2"/><ellipse cx="16" cy="14.500" rx="7" ry="13.500" fill="none" stroke="#6c98cc" stroke-width="1.500"/><path d="M1 14h30M4 7h24M4 22h24" stroke="#6c98cc" stroke-width="1.500"/><path d="M7 7l6 13 7-13h5" fill="none" stroke="#222c38" stroke-width="2"/><circle cx="13" cy="22" r="2" fill="#fff" stroke="#222c38"/><use href="#bp" x="20" y="20" width="12" height="12"/></symbol>

  <symbol id="sty" viewBox="0 0 24 24"><path d="M2 8l6 2 4 8-7 3z" fill="#e44"/><path d="M3 6l8-2 4 6-8 2z" fill="#f6dc58"/><path d="M2 10h6v5H3z" fill="#59b"/><path d="M22 3l-7 7" stroke="#c89048" stroke-width="3.500"/><path d="M12 8l6 6-6 7-6-1q4-3 3-7z" fill="#e0a050" stroke="#804c10"/></symbol>
  <symbol id="grp" viewBox="0 0 24 24"><path d="M1 9v13h12M5 6v13M9 3h11v14H5" fill="none" stroke="#888" stroke-width="2"/><path d="M12 1v14q2 2 4-1V4" stroke="#38608f" stroke-width="1.600" fill="none"/><use href="#bp" x="14" y="15" width="9" height="9"/></symbol>
  <symbol id="eye" viewBox="0 0 24 24"><path d="M0 12Q10 1 24 11 12 23 0 12z" fill="#eef" stroke="#888" stroke-width="1.500"/><circle cx="11" cy="12" r="5" fill="#38608f"/><circle cx="11" cy="12" r="2" fill="#000"/><path d="M14 13h10l-5 7z" fill="#333"/></symbol>
  <symbol id="fil" viewBox="0 0 24 24"><path d="M2 4h20l-8 9v10l-4-3v-7z" fill="#5e8ac0" stroke="#38608f"/><rect x="2" y="1" width="20" height="4" fill="#fce94f" stroke="#988820" stroke-width=".8"/></symbol>
  <symbol id="eps" viewBox="0 0 24 24"><path d="M11 4Q4 1 4 5q0 3 4 3-5 0-5 4t8 2" fill="none" stroke="#aaa" stroke-width="1.800"/><path d="M12 13h11v10h-3v-5h-5v5h-3z" fill="#ccc"/></symbol>
  <symbol id="exa" viewBox="0 0 24 24"><path d="M1 3h22M4 3v18h4M4 11h4" stroke="#999" stroke-width="1.500" fill="none"/><rect x="7" y="7" width="5" height="5" fill="#f8a030"/><rect x="7" y="16" width="5" height="5" fill="#f8a030"/><path d="M14 2h5v12h4l-6.500 8L10 14h4z" fill="#5e8ac0" stroke="#38608f"/></symbol>
  <symbol id="col" viewBox="0 0 24 24"><path d="M1 3h22M4 3v18h4M4 11h4" stroke="#999" stroke-width="1.500" fill="none"/><rect x="7" y="7" width="5" height="5" fill="#f8a030"/><rect x="7" y="16" width="5" height="5" fill="#f8a030"/><path d="M14 22h5V9h4l-6.500-8L10 9h4z" fill="#5e8ac0" stroke="#38608f"/></symbol>
  <symbol id="rem" viewBox="0 0 24 24"><rect x="2" y="2" width="18" height="17" fill="#f2f2ee" stroke="#888" stroke-width="1.600"/><rect x="14" y="15" width="9" height="8" rx="2" fill="#e24c4c"/><path d="M16 19h5" stroke="#fff" stroke-width="2"/></symbol>
  <symbol id="flt" viewBox="0 0 12 12"><rect x=".5" y=".5" width="11" height="11" rx="2" fill="none" stroke="#555"/><path d="M5 5V3h4v4H7M3 5h4v4H3z" fill="none" stroke="#555"/></symbol>
  <symbol id="cls" viewBox="0 0 12 12"><rect x=".5" y=".5" width="11" height="11" rx="2" fill="none" stroke="#555"/><path d="M3 3l6 6M9 3L3 9" stroke="#444" stroke-width="1.800"/></symbol>

  <symbol id="mod" viewBox="0 0 24 24"><g stroke="#c11" stroke-width="2.600"><path d="M8 0v15M.5 7.500h15M2.700 2.200l10.600 10.600M13.300 2.200L2.700 12.800"/></g><circle cx="8" cy="7.500" r="2" fill="#fff"/><circle cx="19" cy="12" r="4" fill="#666" stroke="#444" stroke-dasharray="2 1"/><circle cx="12" cy="20" r="4" fill="#8ab0e0" stroke="#68c" stroke-dasharray="2 1"/><path d="M12 13h12l-6 8z" fill="#333"/></symbol>
  <symbol id="pys" viewBox="0 0 24 24"><use href="#py" width="24" height="24"/><path d="M10 12h14l-7 9z" fill="#3a2c10"/></symbol>
  <symbol id="clk" viewBox="0 0 24 24"><circle cx="12" cy="12" r="10.500" fill="#f4f4f4" stroke="#666" stroke-width="1.500"/><path d="M12 4v9l5 4" stroke="#555" stroke-width="1.500" fill="none"/></symbol>
  <symbol id="log" viewBox="0 0 24 24"><path d="M4 1h11l5 5v17H4z" fill="#fff" stroke="#555" stroke-width="1.300"/><path d="M15 1v5h5M7 8h7M7 12h10M7 16h10M7 20h10" stroke="#333" stroke-width="1.300" fill="none"/></symbol>
  <symbol id="edt" viewBox="0 0 24 24"><rect x="2" y="2" width="14" height="14" fill="#b8b49a"/><path d="M21 5l-8 14-2 4 4-2 8-14z" fill="#ccc" stroke="#999"/></symbol>
  <symbol id="wre" viewBox="0 0 24 24"><path d="M12 12l10 10" stroke="#54483a" stroke-width="6"/><path d="M12 12l9.500 9.500" stroke="#f2d470" stroke-width="4"/><path d="M1 6l4 3 3-1V4L6 1q6 0 6 7l3 4-3 3-4-4Q2 11 1 6z" fill="#eee" stroke="#444"/></symbol>
  <symbol id="lup" viewBox="0 0 16 16"><circle cx="6" cy="6" r="4.500" fill="none" stroke="#999" stroke-width="1.500"/><path d="M9 9.500l5 5" stroke="#999" stroke-width="2"/></symbol>
  <symbol id="gdal" viewBox="0 0 32 34"><circle cx="18" cy="19" r="13" fill="#6cc4ec"/><path d="M10 10l8 0 4 6-6 6z" fill="#2e8b4a"/><path d="M13 8l2 20M13 10l12 6M13 14h9" stroke="#d22" stroke-width="1.300"/><path d="M2 12l5-4M8 7l7-6M6 4l5 6" stroke="#222" stroke-width="3.500"/><text x="16" y="33" font-size="14" font-weight="700" fill="#000" text-anchor="middle" textLength="30" lengthAdjust="spacingAndGlyphs">GDAL</text></symbol>
  <symbol id="grs" viewBox="0 0 32 32"><path d="M16 1l12 13-12 13L4 14z" fill="#fff" stroke="#555" stroke-width="1.200"/><path d="M16 26V5M16 26L9 11M16 26l7-14M16 26L6 15M16 26l10-10" stroke="#1f9a28" stroke-width="1.500"/><path d="M4 17l12 13 12-13M4 30.500h9M19 30.500h9" fill="none" stroke="#222" stroke-width="1.800"/></symbol>
  <symbol id="otb" viewBox="0 0 32 32"><circle cx="10" cy="17" r="9" fill="#46689c" stroke="#222" stroke-width="1.500"/><circle cx="24" cy="18" r="8" fill="#c41c1c" stroke="#222" stroke-width="1.500"/><ellipse cx="15" cy="17" rx="4" ry="7" fill="#e4e8ee" stroke="#222" stroke-width="1.500"/><ellipse cx="22" cy="18" rx="3.500" ry="5" fill="#58b070" stroke="#222"/><path d="M8 6q6-4 12 0M20 2v9" stroke="#222" stroke-width="2" fill="none"/></symbol>
  <symbol id="saga" viewBox="0 0 32 32"><path d="M25 4.500A14 14 0 1 0 30 18" fill="none" stroke="#0a549c" stroke-width="3.200"/><path d="M20 8l9-7v10z" fill="#0a549c"/><path d="M31.500 17.500H9L15.500 9 26 22" fill="none" stroke="#0a549c" stroke-width="3"/><path d="M5 10l13.500 19" stroke="#0a549c" stroke-width="2.600"/><path d="M9 6l7-1M4 14l2 8" stroke="#a8c4e4" stroke-width="1.500"/></symbol>

  <symbol id="up" viewBox="0 0 16 9"><path d="M8 0l8 9H0z"/></symbol>
  <symbol id="dn" viewBox="0 0 16 9"><path d="M0 0h16L8 9z"/></symbol>
  <symbol id="chk" viewBox="0 0 28 28"><path d="M5 14.500l5.500 8L22 5" fill="none" stroke="#000" stroke-width="3.500"/></symbol>
</svg>

<header class="title"><svg class="qi"><use href="#q"/></svg><span class="ttl">*Untitled Project - QGIS</span>
  <div class="wc"><svg viewBox="0 0 20 20"><path d="M0 10.500h20"/></svg><svg viewBox="0 0 20 20"><path d="M4.500 4.500v-4h15v15h-4M.5 4.500h15v15H.5z"/></svg><svg viewBox="0 0 20 20"><path d="M.5.500l19 19M19.500.500l-19 19"/></svg></div>
</header>
<nav class="menu"><span>Pro<u>j</u>ect</span><span><u>E</u>dit</span><span><u>V</u>iew</span><span><u>L</u>ayer</span><span><u>S</u>ettings</span><span><u>P</u>lugins</span><span>Vect<u>o</u>r</span><span><u>R</u>aster</span><span><u>D</u>atabase</span><span><u>W</u>eb</span><span>SCP</span><span>Pro<u>c</u>essing</span><span><u>H</u>elp</span></nav>

<div class="bar">
  <i class="grip g26"></i><svg><use href="#hand"/></svg><svg><use href="#pan"/></svg><svg><use href="#zin"/></svg><svg><use href="#zout"/></svg><svg><use href="#z11"/></svg><svg><use href="#zfull"/></svg><svg class="dis"><use href="#zsel"/></svg><svg><use href="#zlay"/></svg><svg><use href="#zlast"/></svg><svg class="dis"><use href="#znext"/></svg><svg><use href="#map1"/></svg><svg><use href="#map2"/></svg><svg><use href="#map3"/></svg><svg><use href="#refr"/></svg>
  <i class="grip g30"></i><svg><use href="#iden"/></svg><svg class="dis"><use href="#act"/></svg><i class="dd lt"></i><svg class="dis"><use href="#selr"/></svg><i class="dd lt"></i><svg class="dis"><use href="#form"/></svg><i class="dd lt"></i><svg><use href="#dsel"/></svg><svg class="dis"><use href="#tab"/></svg><svg class="dis"><use href="#abac"/></svg><svg class="on"><use href="#gear"/></svg><svg><use href="#sum"/></svg><svg><use href="#meas"/></svg><i class="dd"></i><svg><use href="#tip"/></svg><svg><use href="#ann"/></svg><i class="dd"></i>
</div>
<div class="bar">
  <i class="grip g26"></i><svg><use href="#dsm"/></svg><svg><use href="#gpk"/></svg><svg><use href="#vs"/></svg><svg><use href="#fs"/></svg><svg><use href="#chip"/></svg>
  <i class="grip g30"></i><svg class="dis"><use href="#abc"/></svg><svg class="dis"><use href="#dia"/></svg><svg class="sel"><use href="#abp"/></svg><svg class="dis"><use href="#abp"/></svg><svg class="dis"><use href="#abe"/></svg><svg class="dis"><use href="#abm"/></svg><svg class="dis"><use href="#abr"/></svg><svg class="dis"><use href="#abed"/></svg>
  <i class="grip g33"></i><svg><use href="#glc"/></svg><svg><use href="#gls"/></svg><svg><use href="#glbn"/></svg>
  <i class="grip g32"></i><svg><use href="#pyc"/></svg><svg><use href="#ea"/></svg><svg><use href="#idg"/></svg>
  <i class="grip g32"></i><svg><use href="#help"/></svg>
  <i class="grip g33"></i><svg><use href="#crs"/></svg><svg><use href="#snp"/></svg>
  <i class="grip g30"></i><svg class="dis"><use href="#tri"/></svg><svg class="dis"><use href="#pts"/></svg><i class="dd lt"></i><svg class="dis"><use href="#d1"/></svg><svg class="dis"><use href="#d2"/></svg><svg class="dis"><use href="#d3"/></svg><svg class="dis"><use href="#d4"/></svg><svg class="dis"><use href="#d5"/></svg><svg class="dis"><use href="#d6"/></svg><svg class="dis"><use href="#d7"/></svg><svg class="dis"><use href="#d8"/></svg><svg class="dis"><use href="#d9"/></svg><svg class="dis"><use href="#d10"/></svg><svg class="dis"><use href="#d11"/></svg><svg class="dis"><use href="#d11"/></svg><svg class="dis"><use href="#d12"/></svg><svg class="dis"><use href="#d13"/></svg><svg class="dis"><use href="#d14"/></svg><i class="dd lt"></i>
</div>
<div class="bar scp">
  <i class="grip g26"></i><i class="grip g33"></i><svg><use href="#s1"/></svg><svg><use href="#s2"/></svg>
  <b class="knob w114">RGB =</b><div class="combo w79"><span>-2-1</span><i class="dd"></i></div><svg><use href="#s3"/></svg><svg><use href="#s4"/></svg><svg><use href="#s5"/></svg>
  <b class="knob w116">ROI</b><svg><use href="#s6"/></svg><svg><use href="#s7"/></svg><svg class="dis"><use href="#s8"/></svg>
  <b class="tag w47">Dist</b><div class="spin w99"><span>0.01000</span><i><svg><use href="#up"/></svg><svg><use href="#dn"/></svg></i></div>
  <b class="tag w44">Min</b><div class="spin w59"><span>60</span><i><svg><use href="#up"/></svg><svg><use href="#dn"/></svg></i></div>
  <b class="tag w51">Max</b><div class="spin w59"><span>100</span><i><svg><use href="#up"/></svg><svg><use href="#dn"/></svg></i></div>
  <svg><use href="#s5b"/></svg><b class="knob w125">Preview</b><svg><use href="#s9"/></svg><svg class="dis"><use href="#s8"/></svg>
  <b class="tag w19">T</b><div class="spin w49"><span>0</span><i><svg><use href="#up"/></svg><svg class="lo"><use href="#dn"/></svg></i></div>
  <b class="tag w19">S</b><div class="spin w60"><span>200</span><i><svg><use href="#up"/></svg><svg><use href="#dn"/></svg></i></div>
  <svg><use href="#s10"/></svg><svg><use href="#s11"/></svg><i class="grip g32"></i><svg><use href="#s12"/></svg>
  <div class="spin w59"><span>0</span><i><svg><use href="#up"/></svg><svg><use href="#dn"/></svg></i></div><svg><use href="#s13"/></svg>
  <div class="spin w59"><span>1</span><i><svg><use href="#up"/></svg><svg><use href="#dn"/></svg></i></div><svg><use href="#s13"/></svg>
  <div class="spin w59"><span>2</span><i><svg><use href="#up"/></svg><svg><use href="#dn"/></svg></i></div><svg><use href="#s13"/></svg><svg class="dis"><use href="#s14"/></svg>
</div>

<main>
  <aside class="side">
    <i class="hgrip"></i>
    <div><svg><use href="#vp"/></svg></div><div><svg><use href="#rp"/></svg></div><div><svg><use href="#com"/></svg></div><div><svg><use href="#fp"/></svg></div><div><svg><use href="#vl"/></svg></div>
    <div><svg><use href="#pg"/></svg><i class="dd"></i></div><div><svg><use href="#g1"/></svg><i class="dd"></i></div><div><svg><use href="#g2"/></svg></div><div><svg><use href="#g3"/></svg><i class="dd"></i></div><div><svg><use href="#gpk"/></svg><i class="dd"></i></div>
  </aside>
  <section class="layers">
    <div class="phead"><span>Layers</span><svg><use href="#flt"/></svg><svg><use href="#cls"/></svg></div>
    <div class="ptools"><svg><use href="#sty"/></svg><svg><use href="#grp"/></svg><svg><use href="#eye"/></svg><svg><use href="#fil"/></svg><svg><use href="#eps"/></svg><i class="dd lt"></i><svg><use href="#exa"/></svg><svg><use href="#col"/></svg><svg><use href="#rem"/></svg></div>
    <div class="ltree">
      <div class="lrows">
        <div class="lr cur"><i class="dd"></i><i class="box"></i><svg class="r1"><use href="#ras"/></svg><em class="live">Output Image</em></div>
        <div class="lc"><i class="c1"></i>1</div><div class="lc"><i class="c2"></i>2</div><div class="lc"><i class="c3"></i>3</div><div class="lc"><i class="c4"></i>4</div>
        <div class="lr"><i class="dd"></i><i class="box"></i><svg class="r2"><use href="#ras"/></svg><em>Clusters</em></div>
        <div class="lc"><i class="c1"></i>1</div><div class="lc"><i class="c5"></i>2</div><div class="lc"><i class="c6"></i>3</div>
      </div>
      <div class="sb"><b><svg><use href="#up"/></svg></b></div>
    </div>
  </section>
  <section class="canvas">
    <svg class="sat" viewBox="0 0 892 820" preserveAspectRatio="none">
      <defs>
        <linearGradient id="base"><stop offset="0" stop-color="#c2bfe6"/><stop offset=".11" stop-color="#b8bcd2"/><stop offset=".2" stop-color="#a2a6a0"/><stop offset=".34" stop-color="#948a7c"/><stop offset=".5" stop-color="#a8a082"/><stop offset=".68" stop-color="#948670"/><stop offset=".85" stop-color="#967c6e"/><stop offset="1" stop-color="#8e6c60"/></linearGradient>
        <filter id="n1" x="0" y="0" width="100%" height="100%" color-interpolation-filters="sRGB"><feTurbulence type="fractalNoise" baseFrequency=".31 .34" numOctaves="3" seed="4"/><feColorMatrix values="1.900 .5 0 0 -.7  1.900 0 .4 0 -.66  1.900 .1 .4 0 -.7  0 0 0 0 1"/></filter>
        <filter id="n2" x="0" y="0" width="100%" height="100%" color-interpolation-filters="sRGB"><feTurbulence type="fractalNoise" baseFrequency=".019 .023" numOctaves="7" seed="31"/><feColorMatrix values="1.100 .3 0 0 -.2  1.100 0 .3 0 -.2  1.100 -.1 .3 0 -.15  0 0 0 0 1"/></filter>
        <filter id="n3" x="0" y="0" width="100%" height="100%" color-interpolation-filters="sRGB"><feTurbulence type="turbulence" baseFrequency=".035 .04" numOctaves="5" seed="12"/><feColorMatrix values="0 0 0 0 .14  0 0 0 0 .1  0 0 0 0 .12  -9 0 0 0 .95"/></filter>
        <filter id="rough" x="-5%" y="-5%" width="110%" height="110%"><feTurbulence type="fractalNoise" baseFrequency=".07" numOctaves="4" seed="2"/><feDisplacementMap in="SourceGraphic" scale="22" xChannelSelector="R" yChannelSelector="G"/></filter>
        <filter id="soft" x="-10%" y="-10%" width="120%" height="120%"><feGaussianBlur stdDeviation="4" result="b"/><feTurbulence type="fractalNoise" baseFrequency=".09" numOctaves="4" seed="7"/><feDisplacementMap in="b" scale="36" xChannelSelector="R" yChannelSelector="G"/></filter>
      </defs>
      <rect width="892" height="820" fill="url(#base)"/>
      <g filter="url(#soft)">
        <path d="M85 8L235 0l-15 110-70 40-40-60z" fill="#7c9890"/>
        <path d="M130 115l75-10-20 66h-70z" fill="#d0c296"/>
        <path d="M110 150l20-10-8 31h-14z" fill="#343458"/>
        <path d="M262 20l40-20 60 0-30 60-50 50-6 61h-50l14-60z" fill="#6c6456"/>
        <path d="M570 60l60-20 20 60-30 50-50-40z" fill="#5c6444"/>
        <path d="M690 20l70-20h20l-40 40-50 20z" fill="#38442c"/>
        <path d="M650 80l20-10 10 25-20 20-12-10z" fill="#2e5e2c"/>
        <path d="M560 30l36 18-24 4z" fill="#4b2440"/>
        <path d="M640 110l22 20-10 15-18-15z" fill="#d0b47c"/>
        <path d="M850 0h42v16h-25z" fill="#40203c"/>
        <path d="M861 570l41-5v40l-36 2z" fill="#4c2440"/>
        <path d="M876 655h26v20h-24z" fill="#2c1c50"/>
        <path d="M866 300h36v60h-36z" fill="#75463c"/>
        <path d="M862 480h40v60h-40z" fill="#a08ca0"/>
      </g>
      <rect width="892" height="820" filter="url(#n2)" class="ov"/>
      <rect width="892" height="820" filter="url(#n3)" opacity=".5"/>
      <g filter="url(#rough)">
        <path d="M75 0L62 40l30 45 40 10" stroke="#8c7484" stroke-width="9" fill="none"/>
        <path d="M112 0l90 120" stroke="#a8c4c4" stroke-width="3" fill="none"/>
        <path d="M760 0L700 80l-50 91M240 96l-24 76" stroke="#4c3438" stroke-width="4" fill="none"/>
        <path d="M322 46l22-14 20 20-14 24-20 10-8 24-30 10-10-20 16-18 4-20z" fill="#185c3c"/>
      </g>
      <path d="M257 -2l-14 36-16 38-14 48-15 54h34l4-66 4-36 24-42 12-32z" fill="#6c8094"/>
      <path d="M254 32l7 0-5 12-6 2zM237 66l5 0-4 16-5 2zM204 148l9 4-2 18-10 0z" fill="#d8ecec"/>
      <path d="M206 92l6 14-4 30-8 34-10 4 12-42z" fill="#a4bcc0" filter="url(#rough)"/>
      <path d="M362 -4h27l-2 8 4 8 12-4 14 7 10-2 8 6 5 3-2 14-3 12-8 14-10 10-12 8-20 5-12 4-10-1 4 8 12 2-2 8-4 11-12 4-14 8-20 3-22 9-12 4 5-12 4-14-5-12 2-12 6-8 4-14 10-10 2-12 8-4 2-8-4-10 5-10z" fill="#04121e"/>
      <path d="M330 66l28-12 2 24-8 18 8 6-8 18-20 6-22 8 6-18-4-14 10-16z" fill="#083430" filter="url(#rough)"/>
      <path d="M284 116l26 4-2 12 6 12-10 2-14-2-4-12z" fill="#8a9ca6"/>
      <rect width="892" height="820" filter="url(#n1)" class="ov"/>
    </svg>
  </section>
  <section class="proc">
    <div class="phead"><span>Processing Toolbox</span><svg><use href="#flt"/></svg><svg><use href="#cls"/></svg></div>
    <div class="ptools"><svg><use href="#mod"/></svg><svg><use href="#pys"/></svg><svg><use href="#clk"/></svg><svg><use href="#log"/></svg><i class="sep"></i><svg class="dis"><use href="#edt"/></svg><i class="sep"></i><svg><use href="#wre"/></svg></div>
    <div class="search"><svg><use href="#lup"/></svg><em>Search...</em></div>
    <div class="ptree">
      <ul>
        <li><i></i><svg><use href="#q"/></svg>Vector general</li><li><i></i><svg><use href="#q"/></svg>Vector geometry</li><li><i></i><svg><use href="#q"/></svg>Vector overlay</li><li><i></i><svg><use href="#q"/></svg>Vector selection</li><li><i></i><svg><use href="#q"/></svg>Vector table</li>
        <li><i></i><svg><use href="#gdal"/></svg>GDAL</li><li><i></i><svg><use href="#grs"/></svg>GRASS</li><li><i></i><svg><use href="#otb"/></svg>OTB</li><li class="open"><i></i><svg><use href="#saga"/></svg>SAGA</li>
        <li class="l2"><i></i>Climate tools</li><li class="l2"><i></i>Georeferencing</li><li class="l2"><i></i>Geostatistics</li><li class="l2 open"><i></i>Image analysis</li>
        <li class="l3"><svg><use href="#saga"/></svg>Artificial neural network classification (opencv)</li>
        <li class="l3"><svg><use href="#saga"/></svg>Automated cloud cover assessment</li>
        <li class="l3"><svg><use href="#saga"/></svg>Boosting classification (opencv)</li>
        <li class="l3"><svg><use href="#saga"/></svg>Change detection</li>
        <li class="l3"><svg><use href="#saga"/></svg>Confusion matrix (polygons / grid)</li>
        <li class="l3"><svg><use href="#saga"/></svg>Confusion matrix (two grids)</li>
        <li class="l3"><svg><use href="#saga"/></svg>Decision tree classification (opencv)</li>
        <li class="l3"><svg><use href="#saga"/></svg>Distance (vigra)</li>
        <li class="l3"><svg><use href="#saga"/></svg>Edge detection (vigra)</li>
        <li class="l3"><svg><use href="#saga"/></svg>Enhanced vegetation index</li>
        <li class="l3"><svg><use href="#saga"/></svg>Fast region growing algorithm</li>
        <li class="l3"><svg><use href="#saga"/></svg>Fourier filter (vigra)</li>
        <li class="l3"><svg><use href="#saga"/></svg>Fourier transform (real, vigra)</li>
        <li class="l3"><svg><use href="#saga"/></svg>Fourier transform (vigra)</li>
        <li class="l3"><svg><use href="#saga"/></svg>Fourier transform inverse (vigra)</li>
        <li class="l3"><svg><use href="#saga"/></svg>Fourier transformation (opencv)</li>
        <li class="l3"><svg><use href="#saga"/></svg>Isodata clustering for grids</li>
        <li class="l3 hit"><svg><use href="#saga"/></svg>K-means clustering for grids</li>
        <li class="l3"><svg><use href="#saga"/></svg>K-nearest neighbours classification (opencv)</li>
        <li class="l3"><svg><use href="#saga"/></svg>Maximum entropy presence prediction</li>
        <li class="l3"><svg><use href="#saga"/></svg>Morphological filter (opencv)</li>
      </ul>
      <div class="sb"><b><svg><use href="#up"/></svg></b><s class="pre"></s><u></u><s></s><b><svg><use href="#dn"/></svg></b></div>
    </div>
  </section>
</main>

<footer class="status">
  <div class="loc"><svg><use href="#lup"/></svg><span>Type to locate (Ctrl+K)</span></div>
  <span class="t coord">Coordinate</span><div class="cf">547462,1690773</div>
  <svg class="ext" viewBox="0 0 32 32"><path d="M1 9h4M8 7l8 2" stroke="#222" stroke-width="3"/><circle cx="18" cy="18" r="10" fill="#fff" stroke="#222" stroke-width="3"/><circle cx="19" cy="20" r="4" fill="none" stroke="#222" stroke-width="2.500"/></svg>
  <span class="t scale">Scale</span><div class="combo w138"><span>1:418731</span><i class="dd"></i></div>
  <svg class="lock" viewBox="0 0 26 32"><path d="M5 16V9q0-7 8-7t8 7v7" fill="none" stroke="#8c8c86" stroke-width="3.500"/><rect y="15" width="26" height="17" rx="2" fill="#5e5e5e"/></svg>
  <span class="t magn">Magnifier</span><div class="spin tall w119"><span>100%</span><i><svg><use href="#up"/></svg><svg><use href="#dn"/></svg></i></div>
  <span class="t rot">Rotation</span><div class="spin tall w115"><span>0.0 °</span><i><svg><use href="#up"/></svg><svg><use href="#dn"/></svg></i></div>
  <i class="box"><svg><use href="#chk"/></svg></i><span class="t rend">Render</span>
  <svg class="crs" viewBox="0 0 28 28"><circle cx="14" cy="13" r="12" fill="#757575"/><ellipse cx="14" cy="13" rx="5.500" ry="12" fill="none" stroke="#eee" stroke-width="1.200"/><path d="M2 10h24M2 16h24M14 1v24" stroke="#eee" stroke-width="1.200"/><path d="M8 26.500h12" stroke="#777" stroke-width="2"/></svg>
  <span class="t epsg">EPSG:32618</span>
  <svg class="msg" viewBox="0 0 30 30"><path d="M15 1c8 0 14 5 14 12 0 4-3 8-5 9l3 6-9-4C9 26 1 21 1 13 1 6 7 1 15 1z" fill="#5c5c5c"/><g fill="#fff"><circle cx="8.500" cy="13" r="2"/><circle cx="15" cy="13" r="2"/><circle cx="21.500" cy="13" r="2"/></g></svg>
  <svg class="puz" viewBox="0 0 24 24"><path d="M1 5h6q-2-4 2-4t2 4h5v6q-4-1-4 2t4 2v6H1v-6q4 1 4-2t-4-2z" fill="#aaa" stroke="#777"/><path d="M15 8q7 1 7-6M19 5l4-4" stroke="#777" stroke-width="2" fill="none"/></svg>
</footer>

<footer class="task">
  <svg viewBox="0 0 32 32"><path d="M0 4.500l13-2V15H0zM14.500 2.300L32 0v15H14.500zM0 16.500h13V30l-13-2zM14.500 16.500H32V32l-17.500-2.300z" fill="#fff"/></svg>
  <svg viewBox="0 0 32 32"><circle cx="20" cy="11" r="10" fill="none" stroke="#fff" stroke-width="2"/><path d="M13 18.500L0 32" stroke="#fff" stroke-width="2.200"/></svg>
  <svg viewBox="0 0 32 32"><circle cx="16" cy="16" r="13" fill="none" stroke="#fff" stroke-width="3.600"/><circle cx="16" cy="16" r="15.300" fill="none" stroke="#aaa" stroke-width="1"/></svg>
  <svg viewBox="0 0 32 32"><path d="M1 1v5h20V1M1 31v-5h20v5M2 10h18v12H2zM29 0v5M29 17v14" fill="none" stroke="#fff" stroke-width="2.200"/><circle cx="29" cy="11" r="3" fill="#fff"/></svg>
  <svg viewBox="0 0 32 32"><rect width="32" height="32" fill="#a81228"/><path d="M6 21q0-7 5-8 3 0 5 4 2-4 5-4 5 1 5 8" fill="none" stroke="#fff" stroke-width="3"/><g fill="#fff"><circle cx="12" cy="12.500" r="2.800"/><circle cx="20" cy="12.500" r="2.800"/><circle cx="16" cy="18" r="2.800"/><circle cx="6.500" cy="21" r="2.600"/><circle cx="25.500" cy="21" r="2.600"/></g></svg>
  <svg viewBox="0 0 32 32"><circle cx="16" cy="16" r="15" fill="#fbc72f"/><path d="M16 16L3 8.500A15 15 0 0 1 29 8.500H16z" fill="#de5246"/><path d="M3 8.500A15 15 0 0 0 15 31l6-12-5-3z" fill="#1e9d58"/><circle cx="16" cy="16" r="7" fill="#fff"/><circle cx="16" cy="16" r="5.500" fill="#4a87ee"/></svg>
  <svg viewBox="0 0 32 32"><path d="M3 15C5-3 29-4 29 16v4H12q1 7 8 7 5 0 8-2v5q-4 2-10 2Q4 31 5 18q1-6 7-8-5 1-9 5zM12 14h10q0-6-5-6t-5 6z" fill="#0a78d7"/></svg>
  <svg viewBox="0 0 32 32"><path d="M10 9V5q0-4 6-4t6 4v4" fill="none" stroke="#fff" stroke-width="2.200"/><path d="M0 9h32v21q0 1-1 1H1q-1 0-1-1z" fill="#fff"/><path d="M10 14h6v6h-6z" fill="#f25022"/><path d="M17.500 14h6v6h-6z" fill="#7fba00"/><path d="M10 21.500h6v6h-6z" fill="#00a4ef"/><path d="M17.500 21.500h6v6h-6z" fill="#ffb900"/></svg>
  <svg viewBox="0 0 32 32"><ellipse cx="14" cy="16" rx="14" ry="9" fill="#a08c8c" transform="rotate(-20 14 16)"/><ellipse cx="17" cy="11" rx="14" ry="9" fill="#f4f4f4" stroke="#d23c3c" stroke-width="2" transform="rotate(-25 17 11)"/><path d="M10 11h14l-4 8M18 5l4 14" stroke="#666" stroke-width="1.300" fill="none"/><circle cx="28" cy="20" r="3.500" fill="none" stroke="#1e88d8" stroke-width="2.200"/><circle cx="22" cy="27" r="3.500" fill="none" stroke="#1e88d8" stroke-width="2.200"/><path d="M20 17l5 5" stroke="#1e88d8" stroke-width="2.400"/></svg>
  <svg viewBox="0 0 32 32"><path d="M2 4h12l2 4H2z" fill="#e0a014"/><path d="M2 7h28v21H2z" fill="#ffd968"/><path d="M7 28v-10h18v10h-5v-5h-8v5z" fill="#3c94dc"/></svg>
  <svg viewBox="0 0 32 32"><circle cx="16" cy="16" r="13.500" fill="none" stroke="#43b02a" stroke-width="4" stroke-dasharray="62 2 3 2 3 2 3 2 3 3" transform="rotate(-75 16 16)"/></svg>
  <svg viewBox="0 0 32 32"><rect x="1" y="4" width="30" height="22" fill="#2c2c2c" stroke="#b8b8b8" stroke-width="2"/><text x="4" y="14" font-size="9" fill="#ddd">C:\_</text><path d="M3 28h26" stroke="#999" stroke-width="2"/></svg>
  <span class="active"><svg viewBox="0 0 32 32"><use href="#q"/></svg></span>
  <svg class="tray up" viewBox="0 0 28 16"><path d="M1 15L14 2l13 13" fill="none" stroke="#fff" stroke-width="2.200"/></svg>
  <svg class="tray pen" viewBox="0 0 32 32"><path d="M12 25L24 2q4-2 5 2L17 27l-5 4zM4 22q-5 3-2 7 5 3 11-4M22 14h7q4 5-6 7" fill="none" stroke="#fff" stroke-width="2"/></svg>
  <svg class="tray kb" viewBox="0 0 46 26"><rect x="1" y="1" width="44" height="24" fill="none" stroke="#fff" stroke-width="2"/><path d="M6 7.500h34M6 13h34" stroke="#fff" stroke-width="2.400" stroke-dasharray="2.500 2"/><path d="M6 19h4M13 19h20M36 19h4" stroke="#fff" stroke-width="2.400"/></svg>
  <span class="eng">ENG</span><span class="time">3:32 PM</span>
  <svg class="tray note" viewBox="0 0 32 32"><path d="M0 0h32v26H20l-4 6-4-6H0z" fill="#fff"/><path d="M6 7h20M6 13h20M6 19h12" stroke="#3a3234" stroke-width="2"/></svg>
  <i class="peek"></i>
</footer>

<div class="dlg">
  <div class="dt"><svg class="qi"><use href="#q"/></svg><span>K-Means Clustering for Grids</span><svg class="x" viewBox="0 0 20 20"><path d="M.5.500l19 19M19.500.500l-19 19"/></svg></div>
  <div class="tabs"><b>Parameters</b><span>Log</span></div>
  <div class="pane">
    <div class="form">
      <div class="lab a">Grids</div>
      <div class="row"><div class="inp ro">0 elements selected</div><div class="btn">...</div></div>
      <div class="lab b">Method</div>
      <div class="cmb"><span>[1] Hill-Climbing (Rubin 1967)</span><svg><use href="#dn"/></svg></div>
      <div class="lab c">Clusters</div>
      <div class="spin big"><span>10</span><i><svg><use href="#up"/></svg><svg><use href="#dn"/></svg></i></div>
      <div class="lab d">Maximum Iterations</div>
      <div class="spin big"><span>0</span><i><svg><use href="#up"/></svg><svg class="lo"><use href="#dn"/></svg></i></div>
      <div class="ck first"><i class="box"></i>Normalise</div>
      <div class="ck"><i class="box"></i>Old Version</div>
      <div class="ck"><i class="box"><svg><use href="#chk"/></svg></i>Update View</div>
      <div class="lab e">Clusters</div>
      <div class="row"><div class="inp ph">[Save to temporary file]</div><div class="btn">...</div></div>
      <div class="ck last"><i class="box"><svg><use href="#chk"/></svg></i>Open output file after running algorithm</div>
      <div class="lab f">Statistics</div>
    </div>
    <div class="sb"><b><svg><use href="#up"/></svg></b><u></u><s></s><b><svg><use href="#dn"/></svg></b></div>
  </div>
  <div class="r1w"><div class="prog">0%</div><div class="pb off">Cancel</div></div>
  <div class="r2w"><div class="pb batch">Run as Batch Process...</div><div class="pb run">Run</div><div class="pb">Close</div></div>
</div>
</body>
</html>
```

FILE: styles.css
```css
* { box-sizing: border-box; }
body {
  margin: 0; width: 2560px; height: 1600px; overflow: hidden; position: relative;
  display: flex; flex-direction: column;
  background: #f0f0f0; color: #000;
  font: 24px/34px "Open Sans", "Noto Sans", sans-serif; letter-spacing: -.52px;
}
i { font-style: normal; }
svg { display: block; flex: none; }
svg text { font-family: "DejaVu Sans", sans-serif; letter-spacing: 0; }
.defs { position: absolute; width: 0; height: 0; }
.dis { opacity: .32; filter: saturate(.4); }

/* title and menu */
.title { height: 45px; background: #fff; display: flex; align-items: center; flex: none; }
.qi { width: 30px; height: 30px; margin: 0 7px 0 3px; }
.ttl { margin-left: -1px; }
.wc { margin-left: auto; display: flex; gap: 72px; padding-right: 39px; }
.wc svg { width: 20px; height: 20px; fill: none; stroke: #111; stroke-width: 1.6; }
.menu {
  height: 37px; flex: none; border-bottom: 1px solid #d4d4d4; padding-left: 16px; line-height: 38px;
  display: grid; grid-template-columns: 93px 60px 71px 76px 106px 98px 86px 85px 117px 69px 61px 133px 80px;
}
.menu u { text-underline-offset: 4px; text-decoration-thickness: 1.5px; text-decoration-skip-ink: none; }

/* toolbars */
.bar {
  height: 55px; flex: none; display: flex; align-items: center;
  background: linear-gradient(#fafafa, #eeeeee); border-bottom: 1px solid #b4b4b4;
}
.bar > svg { width: 42px; height: 32px; }
.scp { height: 54px; padding-top: 1px; }
.scp > svg { width: 34px; height: 24px; }
.grip { height: 18px; }
.grip::after {
  content: ""; display: block; width: 6px; height: 18px; margin: 0 8px 0 auto;
  background: repeating-linear-gradient(#f4f4f4 0 2px, transparent 2px 3px), repeating-linear-gradient(90deg, #b4b4b4 0 1px, #f4f4f4 1px 3px);
}
.g26 { width: 26px; } .g30 { width: 30px; } .g32 { width: 32px; } .g33 { width: 33px; }
.dd { width: 24px; height: 10px; flex: none; }
.dd::after { content: ""; display: block; width: 16px; height: 9px; margin: 0 auto; background: #5a5a5a; clip-path: polygon(0 0, 100% 0, 50% 100%); }
.dd.lt::after { background: #a4a4a4; }
.bar > .on { height: 40px; padding: 3px 0; background: #dcdcdc; border: 1px solid #a8a8a8; border-radius: 3px; }
.bar > .sel { width: 34px; height: 30px; margin: 0 4px; background: #f0f6fc; border: 2px solid #1272d4; }
.knob {
  height: 31px; margin: 0 1px; padding-left: 40px; color: #fff; font-weight: 400; font-size: 21.5px; line-height: 32px;
  font-family: "DejaVu Sans Condensed", "DejaVu Sans", sans-serif; font-stretch: condensed;
  background: radial-gradient(circle at 14px 50%, #969696 6px, #000 7px, #000 13.5px, transparent 14.5px), linear-gradient(90deg, #4a4a4a, #a0a0a0);
}
.tag { height: 25px; background: #545454; color: #fff; overflow: hidden; padding-left: 7px; line-height: 26px; font-size: 23px; margin-left: 2px; }
.combo, .spin {
  display: flex; border: 1px solid #a6a6a6; border-radius: 3px; background: #fff; overflow: hidden;
  font: 22px/32px "DejaVu Sans Condensed", "DejaVu Sans", sans-serif; font-stretch: condensed; letter-spacing: -.6px;
}
.combo { height: 33px; align-items: center; }
.combo span { flex: 1; min-width: 0; padding-left: 3px; white-space: nowrap; }
.combo .dd { width: 38px; height: 100%; padding: 11px 0; background: linear-gradient(#fdfdfd, #ececec); }
.spin { height: 37px; margin-left: 2px; margin-right: 1px; line-height: 36px; flex: none; }
.spin span { flex: 1; min-width: 0; overflow: hidden; padding-left: 4px; white-space: nowrap; }
.spin > i { width: 28px; flex: none; border-left: 1px solid #b4b4b4; background: linear-gradient(#fdfdfd, #ededed); display: flex; flex-direction: column; align-items: center; justify-content: center; gap: 7px; }
.spin > i svg, .sb b svg { width: 15px; height: 9px; fill: #5a5a5a; }
.spin > i svg.lo { fill: #a4a4a4; }
.scp .combo { margin: 0 1px; letter-spacing: -.8px; }
.scp .spin { letter-spacing: -1px; }
.w114 { width: 114px; } .w116 { width: 116px; } .w125 { width: 125px; margin-left: 2px; } .w79 { width: 79px; }
.w47 { width: 47px; } .w44 { width: 44px; } .w51 { width: 51px; } .w19 { width: 19px; padding-left: 3px; }
.w99 { width: 99px; } .w59 { width: 59px; } .w49 { width: 49px; } .w60 { width: 60px; }
.w138 { width: 138px; } .w119 { width: 119px; } .w115 { width: 115px; }

/* main area */
main { flex: none; height: 1249px; display: flex; padding-top: 1px; }
.side { width: 80px; border-right: 1px solid #b0b0b0; padding-top: 12px; background: linear-gradient(90deg, #fafafa, #ececec); }
.hgrip { display: block; width: 17px; height: 5px; margin: 0 0 7px 33px; background: repeating-linear-gradient(90deg, #f2f2f2 0 2px, transparent 2px 3px), repeating-linear-gradient(#b4b4b4 0 1px, #f2f2f2 1px 3px); }
.side > div { height: 41px; display: flex; align-items: center; padding-left: 12px; gap: 4px; }
.side > div > svg { width: 32px; height: 32px; }
.side .dd { height: 9px; }
.r0, .r1, .r2 { --e: transparent; }
.r0 { --l: #6a95cc; --d: #263c58; }
.r1 { --l: #72aadc; --d: #1c4a74; --e: #f0f0f0; }
.r2 { --l: #a8c4e4; --d: #2c3e54; --e: #fff; }

.layers { width: 337px; display: flex; flex-direction: column; }
.phead { height: 34px; display: flex; gap: 4px; align-items: center; padding: 0 14px 4px 4px; line-height: 32px; }
.phead span { flex: 1; padding-top: 2px; }
.phead svg { width: 12px; height: 12px; margin-top: 2px; }
.ptools { height: 42px; display: flex; align-items: center; gap: 10px; padding: 0 0 6px 12px; }
.ptools svg { width: 24px; height: 24px; }
.ptools .dd { width: 18px; margin: 0 -1px 0 -3px; }
.ltree { flex: 1; width: 325px; border: 1px solid #b0b0b0; background: #fff; display: flex; }
.lrows { flex: 1; line-height: 34px; }
.lr { height: 34px; display: flex; align-items: center; padding-left: 8px; font-weight: 700; color: #bababa; }
.lr.cur { background: #f0f0f0; }
.lr em { margin-left: 8px; padding-top: 2px; letter-spacing: -.35px; }
.lr .live { color: #000; letter-spacing: -.15px; text-decoration: underline; text-underline-offset: 4px; text-decoration-thickness: 1.5px; text-decoration-skip-ink: none; }
.lr svg { width: 26px; height: 26px; }
.box { width: 28px; height: 28px; background: #fff; border: 1px solid #bcbcbc; box-shadow: inset 0 2px 2px #eee; flex: none; display: block; }
.box svg { width: 26px; height: 26px; }
.lr .box { margin: 0 10px 0 11px; }
.lc { height: 34px; display: flex; align-items: center; gap: 6px; padding-left: 83px; line-height: 36px; }
.lc i { width: 27px; height: 27px; }
.c1 { background: #440154; } .c2 { background: #31688e; } .c3 { background: #35b779; } .c4 { background: #fde725; } .c5 { background: #3a528b; } .c6 { background: #21908c; }
.sb { width: 29px; flex: none; border-left: 1px solid #b8b8b8; display: flex; flex-direction: column; background: linear-gradient(90deg, #fff, #f0f0f0); }
.sb b { height: 28px; flex: none; border-bottom: 1px solid #b8b8b8; display: flex; align-items: center; justify-content: center; }
.sb b:last-child:not(:first-child) { border-bottom: 0; border-top: 1px solid #b8b8b8; }
.sb s { flex: 1; background: #e4e4e4; }
.sb u { background: linear-gradient(90deg, #fff, #f2f2f2); }

.canvas { width: 1338px; background: #fff; border: 1px solid #b0b0b0; padding: 201px 0 0 281px; overflow: hidden; }
.sat { width: 892px; height: 820px; isolation: isolate; }
.ov { mix-blend-mode: overlay; opacity: .9; }

.proc { flex: 1; min-width: 0; padding-left: 12px; display: flex; flex-direction: column; }
.proc .phead { padding: 0 3px 4px 4px; letter-spacing: -.6px; }
.proc .ptools { padding-left: 12px; }
.sep { width: 1px; height: 30px; background: #d0d0d0; margin: 0 1px; }
.search { height: 34px; border: 1px solid #a6a6a6; border-radius: 3px; background: #fff; display: flex; align-items: center; color: #b4b4b4; padding-left: 7px; gap: 8px; }
.search svg { width: 14px; height: 14px; }
.search em { font-size: 22.5px; }
.ptree { flex: 1; min-height: 0; background: #fff; border: 1px solid #b0b0b0; border-right: 0; display: flex; overflow: hidden; }
.ptree ul { list-style: none; margin: 0; padding: 0; flex: 1; }
.ptree li { height: 34px; display: flex; align-items: center; padding-left: 12px; white-space: pre; }
.ptree li > i { width: 16px; height: 16px; background: #5a5a5a; clip-path: polygon(25% 0, 80% 50%, 25% 100%); }
.ptree li.open > i { clip-path: polygon(0 15%, 100% 15%, 50% 75%); }
.ptree li > svg { width: 31px; height: 30px; margin: 0 7px 0 15px; }
.ptree .l2 { height: 32.25px; padding-left: 51px; }
.ptree .l2 > i { margin-right: 16px; }
.ptree .l3 { padding-left: 121px; }
.ptree .l3 > svg { margin: 0 8px 0 1px; }
.ptree .hit { background: linear-gradient(90deg, #0078d7 158px, transparent 158px), linear-gradient(#1a86dc, #0a7cdc); color: #d8ecff; }
.hit > svg { opacity: .6; }
.ptree .sb .pre { flex: none; height: 161px; border-bottom: 1px solid #b8b8b8; }
.ptree .sb u { height: 423px; border-bottom: 1px solid #b8b8b8; }

/* status bar */
.status { height: 45px; flex: none; display: flex; align-items: center; font: 22px/32px "DejaVu Sans Condensed", "DejaVu Sans", sans-serif; font-stretch: condensed; letter-spacing: -.6px; white-space: nowrap; }
.loc { width: 387px; height: 33px; margin-left: 4px; border: 1px solid #a6a6a6; border-radius: 3px; background: #fff; display: flex; align-items: center; gap: 7px; padding-left: 7px; color: #787878; }
.loc svg { width: 14px; height: 14px; }
.coord { margin-left: 824px; width: 104px; }
.cf { width: 158px; height: 33px; border: 1px solid #a6a6a6; border-radius: 3px; background: #fff; padding-left: 3px; }
.ext { width: 32px; height: 32px; margin: 0 13px 0 5px; }
.scale { width: 52px; }
.lock { width: 25px; height: 31px; margin: 0 10px 0 13px; }
.magn { width: 88px; }
.tall span { padding-left: 5px; }
.rot { margin-left: 9px; width: 84px; }
.status .box { margin: 0 11px 0 7px; }
.rend { width: 84px; }
.crs { width: 27px; height: 27px; margin-right: 5px; }
.epsg { width: 144px; letter-spacing: -.7px; }
.msg { width: 29px; height: 29px; margin-right: 13px; }
.puz { width: 24px; height: 24px; }

/* dialog window */
.dlg {
  position: absolute; left: 82px; top: 621px; width: 1471px; height: 900px; background: #f0f0f0; border: 1px solid #9c9c9c;
  box-shadow: 0 8px 26px rgba(0, 0, 0, .38), 0 0 8px rgba(0, 0, 0, .2);
  font: 22px/30px "DejaVu Sans Condensed", "DejaVu Sans", sans-serif; font-stretch: condensed; letter-spacing: -.5px;
}
.dt { height: 56px; background: #fff; display: flex; align-items: center; color: #999; font: 24px "Open Sans", "Noto Sans", sans-serif; letter-spacing: -.5px; padding-left: 11px; }
.dt span { flex: 1; margin-left: -1px; }
.dt .x { width: 20px; height: 20px; margin: 0 22px 2px 0; stroke: #999; stroke-width: 1.5; }
.tabs { display: flex; align-items: flex-end; margin: 21px 0 0 22px; height: 46px; position: relative; z-index: 1; }
.tabs b, .tabs span { font-weight: 400; text-align: center; border: 1px solid #b0b0b0; border-bottom: 0; border-radius: 3px 3px 0 0; }
.tabs b { width: 156px; height: 49px; line-height: 51px; background: #fff; margin-bottom: -3px; }
.tabs span { width: 79px; height: 44px; line-height: 49px; background: #e9e9e9; border-left: 0; }
.pane { margin: 0 21px 0 22px; height: 613px; border: 1px solid #ababab; display: flex; overflow: hidden; }
.form { flex: 1; padding: 0 4px 0 5px; }
.row { display: flex; gap: 7px; height: 33px; }
.inp { flex: 1; border: 1px solid #a6a6a6; border-radius: 3px; padding-left: 2px; line-height: 33px; background: #fff; color: #828282; letter-spacing: -.65px; }
.ro { background: #efefef; color: #787878; letter-spacing: -.8px; }
.btn, .pb, .cmb { border: 1px solid #a6a6a6; border-radius: 3px; background: linear-gradient(#fff, #ececec); text-align: center; }
.btn { width: 39px; line-height: 34px; }
.cmb { height: 33px; display: flex; align-items: center; padding: 0 13px 0 4px; }
.cmb span { flex: 1; text-align: left; letter-spacing: -.45px; padding-top: 1px; }
.cmb svg { width: 16px; height: 9px; fill: #5a5a5a; }
.lab { line-height: 52px; letter-spacing: -.65px; }
.a { height: 42px; line-height: 38px; } .b { height: 49px; } .c { height: 50px; } .d { height: 52px; line-height: 54px; }
.e { height: 43px; line-height: 39px; } .f { height: 16px; line-height: 44px; }
.big { height: 38px; margin: 0; }
.big span { line-height: 38px; }
.ck { height: 43px; display: flex; align-items: center; gap: 11px; }
.ck .box { margin-top: -1px; }
.first { margin-top: 7px; } .last { margin-top: 6px; letter-spacing: -.45px; }
.pane .sb u { height: 473px; border-bottom: 1px solid #b8b8b8; }
.r1w, .r2w { display: flex; align-items: center; gap: 13px; margin: 50px 21px 0 22px; }
.r2w { margin-top: 12px; }
.prog { flex: 1; height: 34px; border: 1px solid #a6a6a6; border-radius: 3px; background: #fff; text-align: center; line-height: 34px; }
.pb { width: 80px; height: 39px; line-height: 39px; letter-spacing: -.6px; }
.off { color: #7a7a7a; border-color: #c0c0c0; }
.batch { width: 232px; }
.r2w .run { margin-left: auto; border-color: #8c8c8c; }

/* taskbar */
.task {
  height: 60px; flex: none; display: flex; align-items: center; color: #fff; font-size: 23px; position: relative;
  background: linear-gradient(90deg, #3a3a3a 0 150px, #45201f 220px, #44191b 640px, #2c2a2a 690px, #3c3c3c 730px, #383838 1000px, #2a2a2a 1230px, #441b1c 1290px, #452120 1470px, #3a3a3a 1500px, #3c3a3a 1650px, #451b1c 1720px, #482021 2320px, #383838 2390px, #3a3a3a);
}
.task > svg { width: 32px; height: 32px; margin-left: 41px; }
.task > svg:nth-child(1) { margin-left: 20px; }
.task > svg:nth-child(3) { margin-left: 39px; }
.task > svg:nth-child(4) { margin-left: 40px; }
.task > svg:nth-child(5) { margin-left: 46px; }
.task > svg:nth-child(6), .task > svg:nth-child(7) { margin-left: 42px; }
.task > svg:nth-child(9) { margin-left: 44px; }
.active { width: 72px; height: 60px; margin-left: 24px; background: #686464; border-bottom: 4px solid #fbaeae; padding: 14px 20px 0; }
.active svg { width: 32px; height: 32px; }
.task::before { content: ""; position: absolute; left: 376px; bottom: 0; width: 56px; height: 4px; background: #fbaeae; }
.task .up { width: 26px; height: 15px; margin-left: auto; }
.task .pen { margin-left: 35px; }
.task .kb { width: 46px; height: 26px; margin-left: 25px; }
.eng { width: 54px; margin-left: 23px; }
.time { width: 100px; margin-left: 24px; white-space: nowrap; }
.task .note { margin-left: 31px; }
.peek { width: 1px; height: 60px; background: #777; margin: 0 8px 0 41px; }
```
